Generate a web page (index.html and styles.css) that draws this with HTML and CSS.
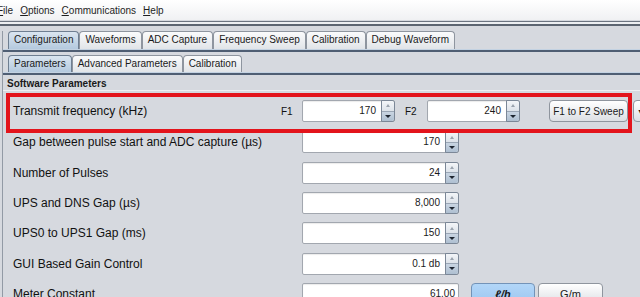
FILE: index.html
```html
<!DOCTYPE html>
<html lang="en">
<head>
    <meta charset="UTF-8">
    <title>Software Parameters</title>
    <link rel="stylesheet" href="styles.css">
</head>
<body>
    <div class="menubar">
        <span class="menu-item"><u>F</u>ile</span>
        <span class="menu-item"><u>O</u>ptions</span>
        <span class="menu-item"><u>C</u>ommunications</span>
        <span class="menu-item"><u>H</u>elp</span>
    </div>
    <div class="menusep"></div>

    <div class="pane">
        <div class="tabs top-tabs">
            <span class="tab active">Configuration</span>
            <span class="tab">Waveforms</span>
            <span class="tab">ADC Capture</span>
            <span class="tab">Frequency Sweep</span>
            <span class="tab">Calibration</span>
            <span class="tab">Debug Waveform</span>
        </div>
        <div class="tabline"></div>

        <div class="tabs sub-tabs">
            <span class="tab active">Parameters</span>
            <span class="tab">Advanced Parameters</span>
            <span class="tab">Calibration</span>
        </div>
        <div class="tabline"></div>

        <div class="section-title">Software Parameters</div>

        <div class="panel">
            <div class="row first">
                <span class="label short">Transmit frequency (kHz)</span>
                <span class="small-label">F1</span>
                <div class="field narrow">
                    <span class="value">170</span>
                    <span class="spinner"><span class="up"></span><span class="down"></span></span>
                </div>
                <span class="small-label f2">F2</span>
                <div class="field narrow">
                    <span class="value">240</span>
                    <span class="spinner"><span class="up"></span><span class="down"></span></span>
                </div>
                <button class="btn sweep">F1 to F2 Sweep</button>
                <button class="btn more">&#9660;</button>
            </div>

            <div class="row">
                <span class="label">Gap between pulse start and ADC capture (µs)</span>
                <div class="field">
                    <span class="value">170</span>
                    <span class="spinner"><span class="up"></span><span class="down"></span></span>
                </div>
            </div>

            <div class="row">
                <span class="label">Number of Pulses</span>
                <div class="field">
                    <span class="value">24</span>
                    <span class="spinner"><span class="up"></span><span class="down"></span></span>
                </div>
            </div>

            <div class="row">
                <span class="label">UPS and DNS Gap (µs)</span>
                <div class="field">
                    <span class="value">8,000</span>
                    <span class="spinner"><span class="up"></span><span class="down"></span></span>
                </div>
            </div>

            <div class="row">
                <span class="label">UPS0 to UPS1 Gap (ms)</span>
                <div class="field">
                    <span class="value">150</span>
                    <span class="spinner"><span class="up"></span><span class="down"></span></span>
                </div>
            </div>

            <div class="row">
                <span class="label">GUI Based Gain Control</span>
                <div class="field">
                    <span class="value">0.1 db</span>
                    <span class="spinner"><span class="up"></span><span class="down"></span></span>
                </div>
            </div>

            <div class="row">
                <span class="label">Meter Constant</span>
                <div class="field">
                    <span class="value plain">61.00</span>
                </div>
                <button class="btn unit selected">ℓ/h</button>
                <button class="btn unit">G/m</button>
            </div>

            <div class="highlight"></div>
        </div>
    </div>
</body>
</html>
```

FILE: styles.css
```css
body {
    margin: 0;
    width: 640px;
    height: 297px;
    overflow: hidden;
    background-color: #d6d9df;
    font-family: "Liberation Sans", Arial, sans-serif;
    font-size: 12px;
    color: #111;
}

/* menu */
.menubar {
    height: 20px;
    display: flex;
    align-items: center;
    gap: 7px;
    margin-left: -3px;
    background: linear-gradient(#ffffff, #f0f1f3);
    font-size: 10px;
    color: #1e1e1e;
}
.menu-item u {
    text-decoration-thickness: 1px;
    text-underline-offset: 1px;
}
.menusep {
    margin-top: 1px;
    height: 2px;
    border-top: 1px solid #6c7480;
    border-bottom: 2px solid #5c6571;
    background-color: #eceef1;
}

/* tabs */
.pane {
    margin-left: 2px;
    border-left: 1px solid #929aa5;
}
.tabs {
    display: flex;
    align-items: flex-end;
    padding-left: 5px;
}
.top-tabs {
    margin-top: 5px;
    height: 18px;
}
.sub-tabs {
    margin-top: 3px;
    height: 17px;
}
.tab {
    box-sizing: border-box;
    height: 100%;
    padding: 0 5px;
    border: 1px solid #8e959f;
    border-bottom: none;
    border-radius: 4px 4px 0 0;
    background: linear-gradient(#fafbfc, #e1e4e8);
    font-size: 10px;
    line-height: 16px;
    color: #1a1a1a;
}
.tab.active {
    background: linear-gradient(#dae5f0, #b4c9de);
    border-color: #6e7e91;
}
.tabline {
    height: 2px;
    border-top: 1px solid #c3d2e2;
    background-color: #4f5e73;
}

.section-title {
    padding: 3px 0 0 4px;
    line-height: 12px;
    font-size: 10px;
    font-weight: bold;
    color: #1a1a1a;
}

/* form panel */
.panel {
    position: relative;
    border-top: 1px solid #eef0f3;
    padding: 5px 0 0 10px;
}
.row {
    display: flex;
    align-items: center;
    height: 30.3px;
}
.row.first {
    margin-bottom: 1px;
}
.label {
    width: 289px;
    flex: none;
    white-space: nowrap;
}
.label.short {
    width: 268px;
}
.small-label {
    width: 21px;
    flex: none;
    font-size: 10px;
}
.small-label.f2 {
    width: 22px;
    margin-left: 10px;
}

.field {
    box-sizing: border-box;
    display: flex;
    width: 157px;
    height: 22px;
    flex: none;
    border: 1px solid #a2a7af;
    border-radius: 2px;
    background-color: #fff;
    box-shadow: inset 0 1px 1px rgba(0, 0, 0, 0.08);
}
.field.narrow {
    width: 93px;
}
.value {
    flex: 1;
    text-align: right;
    padding-right: 5px;
    font-size: 10px;
    line-height: 20px;
    color: #1a1a1a;
}
.value.plain {
    padding-right: 3px;
}
.spinner {
    box-sizing: border-box;
    display: flex;
    flex-direction: column;
    width: 14px;
    margin: -1px -1px -1px 0;
    border: 1px solid #7b8797;
    border-radius: 0 3px 3px 0;
    overflow: hidden;
}
.spinner .up,
.spinner .down {
    flex: 1;
    display: flex;
    align-items: center;
    justify-content: center;
}
.spinner .up {
    background: linear-gradient(#f3f5f8, #dde3ea);
    border-bottom: 1px solid #9aa6b5;
}
.spinner .down {
    background: linear-gradient(#c9d5e2, #aebfd1);
}
.spinner .up::before {
    content: "";
    border-left: 2px solid transparent;
    border-right: 2px solid transparent;
    border-bottom: 3px solid #9aa3ae;
}
.spinner .down::before {
    content: "";
    border-left: 3px solid transparent;
    border-right: 3px solid transparent;
    border-top: 3px solid #1d2530;
}

/* buttons */
.btn {
    box-sizing: border-box;
    height: 22px;
    flex: none;
    padding: 0;
    border: 1px solid #8f959e;
    border-radius: 4px;
    background: linear-gradient(#ffffff, #dcdfe4);
    font-family: "Liberation Sans", Arial, sans-serif;
    font-size: 10px;
    color: #1a1a1a;
}
.btn.sweep {
    width: 79px;
    margin-left: 29px;
}
.btn.more {
    width: 24px;
    margin-left: 5px;
    font-size: 7px;
    text-align: left;
    padding-left: 3px;
}
.btn.unit {
    width: 65px;
    margin-left: 3px;
    font-size: 11px;
}
.btn.unit.selected {
    margin-left: 12px;
    width: 64px;
    background: linear-gradient(#b2d6f8, #9cc6f0);
    border-color: #7393b8;
    font-weight: bold;
    font-style: italic;
}

/* annotation box drawn over the first row */
.highlight {
    position: absolute;
    top: 2px;
    left: 3px;
    width: 626px;
    height: 40px;
    box-sizing: border-box;
    border: 4px solid #e3141c;
}
```
